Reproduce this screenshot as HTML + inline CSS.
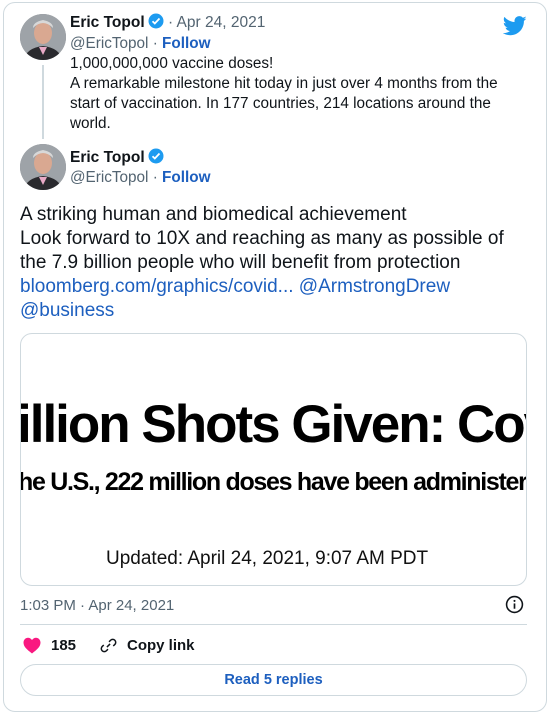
<!DOCTYPE html>
<html><head><meta charset="utf-8"><style>
*{margin:0;padding:0;box-sizing:border-box}
body{width:550px;height:715px;background:#fff;font-family:"Liberation Sans",Helvetica,Arial,sans-serif;color:#0f1419;position:relative;overflow:hidden}
.card{position:absolute;left:3px;top:2px;width:544px;height:710px;border:1px solid #cfd9de;border-radius:12px}
.abs{position:absolute;white-space:nowrap}
.av{position:absolute;width:46px;height:46px;border-radius:50%;overflow:hidden;background:#8a8e92}
.name{font-weight:bold;font-size:15.5px}
.gray{color:#536471}
.blue{color:#1d5fbf}
.t1{font-size:15.3px;line-height:20px}
.t2{font-size:19px;line-height:24px}
.badge{display:inline-block;vertical-align:-2px;margin-left:3px}
</style></head><body>
<div class="card"></div>

<svg class="abs" style="left:503px;top:16px" width="24" height="20" viewBox="0 0 24 20"><path fill="#1d9bf0" d="M23.6 2.4c-.9.4-1.8.6-2.8.8 1-.6 1.800-1.6 2.1-2.7-.9.6-2 1-3.1 1.2C19 .7 17.7.1 16.3.1c-2.7 0-4.8 2.2-4.8 4.8 0 .4 0 .8.1 1.1C7.5 5.8 3.900 3.900 1.5.9c-.4.7-.7 1.6-.7 2.4 0 1.7.9 3.2 2.2 4-.8 0-1.5-.2-2.2-.6v.1c0 2.3 1.7 4.3 3.9 4.7-.4.1-.8.2-1.3.2-.3 0-.6 0-.9-.1.6 1.9 2.4 3.3 4.5 3.4-1.700 1.3-3.700 2.1-6 2.1-.4 0-.8 0-1.2-.1 2.1 1.4 4.7 2.2 7.4 2.2 8.9 0 13.7-7.4 13.7-13.7v-.6c1-.7 1.8-1.5 2.4-2.5z"/></svg>

<div class="av" style="left:20px;top:14px"><svg width="46" height="46"><rect width="46" height="46" fill="#9ea3a8"/><ellipse cx="23" cy="19" rx="9" ry="11" fill="#d9a891"/><path d="M13 14q10-10 20 0 0-6-10-8-10 2-10 8z" fill="#d8d8d8"/><path d="M4 46q2-12 19-14 17 2 19 14z" fill="#2a2a2e"/><path d="M19 33l4 8 4-8z" fill="#e8a9c6"/></svg></div>
<div style="position:absolute;left:42px;top:65px;width:2px;height:74px;background:#cfd9de"></div>
<div class="abs" style="left:70px;top:13px"><span class="name">Eric Topol</span><svg class="badge" width="16" height="16" viewBox="0 0 16 16"><circle cx="8" cy="8" r="7.5" fill="#1d9bf0"/><path d="M4.5 8.2l2.3 2.3 4.7-5" stroke="#fff" stroke-width="1.8" fill="none"/></svg><span class="gray" style="font-size:15.5px"> · Apr 24, 2021</span></div>
<div class="abs gray" style="left:70px;top:35px;font-size:15.3px">@EricTopol · <b class="blue">Follow</b></div>
<div class="abs t1" style="left:70px;top:54px">1,000,000,000 vaccine doses!<br>A remarkable milestone hit today in just over 4 months from the<br>start of vaccination. In 177 countries, 214 locations around the<br>world.</div>

<div class="av" style="left:20px;top:144px"><svg width="46" height="46"><rect width="46" height="46" fill="#9ea3a8"/><ellipse cx="23" cy="19" rx="9" ry="11" fill="#d9a891"/><path d="M13 14q10-10 20 0 0-6-10-8-10 2-10 8z" fill="#d8d8d8"/><path d="M4 46q2-12 19-14 17 2 19 14z" fill="#2a2a2e"/><path d="M19 33l4 8 4-8z" fill="#e8a9c6"/></svg></div>
<div class="abs" style="left:70px;top:148px"><span class="name">Eric Topol</span><svg class="badge" width="16" height="16" viewBox="0 0 16 16"><circle cx="8" cy="8" r="7.5" fill="#1d9bf0"/><path d="M4.5 8.2l2.3 2.3 4.7-5" stroke="#fff" stroke-width="1.8" fill="none"/></svg></div>
<div class="abs gray" style="left:70px;top:169px;font-size:15.3px">@EricTopol · <b class="blue">Follow</b></div>

<div class="abs t2" style="left:20px;top:203px">A striking human and biomedical achievement<br>Look forward to 10X and reaching as many as possible of<br>the 7.9 billion people who will benefit from protection<br><span class="blue">bloomberg.com/graphics/covid... @ArmstrongDrew<br>@business</span></div>

<div style="position:absolute;left:20px;top:333px;width:507px;height:253px;border:1px solid #cfd9de;border-radius:12px;overflow:hidden">
<div class="abs" style="left:-4px;top:60px;font-size:53px;font-weight:bold;letter-spacing:-2px;color:#000">illion Shots Given: Cov</div>
<div class="abs" style="left:-3px;top:134px;font-size:25px;font-weight:bold;letter-spacing:-1.3px;color:#000">he U.S., 222 million doses have been administered</div>
<div class="abs" style="left:85px;top:214px;font-size:19px;color:#111">Updated: April 24, 2021, 9:07 AM PDT</div>
</div>

<div class="abs gray" style="left:20px;top:597px;font-size:15px">1:03 PM · Apr 24, 2021</div>
<svg class="abs" style="left:505px;top:595px" width="19" height="19" viewBox="0 0 18 18"><circle cx="9" cy="9" r="7.5" stroke="#0f1419" stroke-width="1.5" fill="none"/><rect x="8.2" y="8" width="1.6" height="5" fill="#0f1419"/><circle cx="9" cy="5.6" r="1" fill="#0f1419"/></svg>
<div style="position:absolute;left:20px;top:624px;width:507px;height:1px;background:#cfd9de"></div>

<svg class="abs" style="left:23px;top:637px" width="18" height="17" viewBox="0 0 18 17"><path fill="#f91880" d="M9 16.5C4 12.5 0.5 9.8 0.5 5.5 0.5 2.8 2.6.7 5 .7c1.7 0 3 .9 4 2.3C10 1.6 11.3.7 13 .7c2.4 0 4.5 2.1 4.5 4.800 0 4.3-3.5 7-8.5 11z"/></svg>
<div class="abs" style="left:51px;top:637px;font-size:15px;font-weight:bold">185</div>
<svg class="abs" style="left:99px;top:636px" width="19" height="19" viewBox="0 0 18 18" fill="none" stroke="#0f1419" stroke-width="1.4"><path d="M7.5 10.5l3-3"/><path d="M9.5 5.5l1.5-1.5a2.8 2.8 0 014 4l-1.5 1.5"/><path d="M8.5 12.5L7 14a2.8 2.8 0 01-4-4l1.5-1.5"/></svg>
<div class="abs" style="left:127px;top:637px;font-size:15px;font-weight:bold">Copy link</div>

<div style="position:absolute;left:20px;top:664px;width:507px;height:32px;border:1px solid #cfd9de;border-radius:16px;text-align:center;line-height:30px;font-size:14.5px;font-weight:bold" class="blue">Read 5 replies</div>
</body></html>
